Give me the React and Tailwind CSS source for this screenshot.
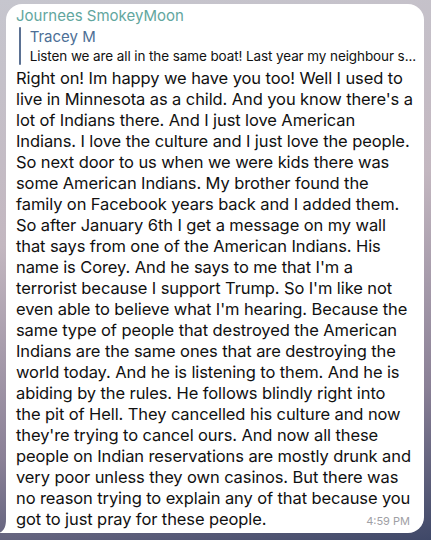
const lines = [
  'Right on! Im happy we have you too! Well I used to',
  "live in Minnesota as a child. And you know there's a",
  'lot of Indians there. And I just love American',
  'Indians. I love the culture and I just love the people.',
  'So next door to us when we were kids there was',
  'some American Indians. My brother found the',
  'family on Facebook years back and I added them.',
  'So after January 6th I get a message on my wall',
  'that says from one of the American Indians. His',
  "name is Corey. And he says to me that I'm a",
  "terrorist because I support Trump. So I'm like not",
  "even able to believe what I'm hearing. Because the",
  'same type of people that destroyed the American',
  'Indians are the same ones that are destroying the',
  'world today. And he is listening to them. And he is',
  'abiding by the rules. He follows blindly right into',
  'the pit of Hell. They cancelled his culture and now',
  "they're trying to cancel ours. And now all these",
  'people on Indian reservations are mostly drunk and',
  'very poor unless they own casinos. But there was',
  'no reason trying to explain any of that because you',
]

export default function App() {
  return (
    <div className="h-[540px] w-[431px] overflow-hidden bg-[linear-gradient(170deg,#c6c6ce_0%,#c3b7c0_40%,#8a8096_75%,#3f4868_100%)] pl-[6px] pt-[4px] font-['Inter',sans-serif]">
      <div className="relative h-[529px] w-[418px] rounded-[16px] rounded-bl-[4px] bg-white pl-[10px] pr-[8px] pt-[2px] text-[#111]">
        {/* tail */}
        <svg className="absolute -left-[7px] bottom-0" width="14" height="14" viewBox="0 0 14 14">
          <path d="M14 0 L14 14 L0 14 C5 12 7 8 7 0 Z" fill="white" />
        </svg>

        <div className="text-[15px] leading-[20px] text-[#62a69e]">Journees SmokeyMoon</div>

        <div className="mt-[1px] flex">
          <div className="ml-[3px] w-[2px] rounded-full bg-[#5b7193]" />
          <div className="pl-[9px]">
            <div className="text-[15px] leading-[20px] text-[#4d6f96]">Tracey M</div>
            <div className="whitespace-nowrap text-[13.5px] leading-[18px] tracking-[-0.1px]">
              Listen we are all in the same boat! Last year my neighbour s...
            </div>
          </div>
        </div>

        <div className="mt-[3px] text-[16.5px] leading-[21px] tracking-[-0.1px]">
          {lines.map((l) => (
            <div key={l} className="whitespace-nowrap">{l}</div>
          ))}
          <div className="flex items-end justify-between">
            <span className="whitespace-nowrap">got to just pray for these people.</span>
            <span className="mb-[-2px] mr-[6px] text-[11px] tracking-normal text-[#a0a0a5]">4:59 PM</span>
          </div>
        </div>
      </div>
    </div>
  )
}
